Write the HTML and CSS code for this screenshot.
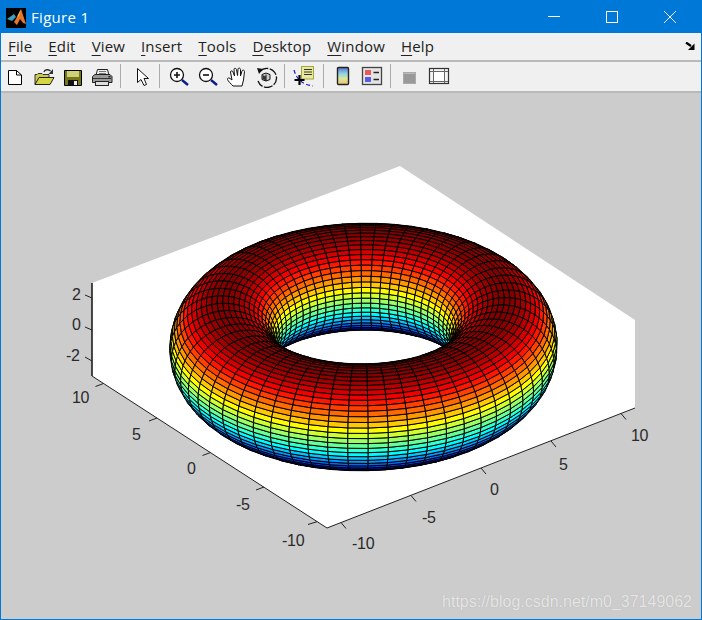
FILE: index.html
```html
<!DOCTYPE html>
<html lang="en">
<head>
<meta charset="utf-8">
<title>Figure 1</title>
<link rel="stylesheet" href="styles.css">
</head>
<body>
<div class="window">
  <header class="titlebar">
    <svg class="app-icon" viewBox="0 0 20 20" width="20" height="20">
      <rect width="20" height="20" fill="#000"/>
      <path d="M1 11 L8 6 L10 9 L6 13 Z" fill="#3f9fc0"/>
      <path d="M8 14 L11 9 L15 1 L20 16 L17 15 L14 11 L11 17 Z" fill="#e8762a"/>
      <path d="M15 1 L13 8 L11 9 Z" fill="#f2c14a"/>
    </svg>
    <span class="title">Figure 1</span>
    <div class="controls">
      <svg class="ctl" viewBox="0 0 58 34" width="58" height="34"><path d="M23 16.500H35" stroke="#fff" fill="none"/></svg>
      <svg class="ctl" viewBox="0 0 58 34" width="58" height="34"><rect x="23.500" y="11.500" width="11" height="11" stroke="#fff" fill="none"/></svg>
      <svg class="ctl" viewBox="0 0 58 34" width="58" height="34"><path d="M23 11L35 23M35 11L23 23" stroke="#fff" fill="none"/></svg>
    </div>
  </header>

  <nav class="menubar">
    <span class="menu"><u>F</u>ile</span>
    <span class="menu"><u>E</u>dit</span>
    <span class="menu"><u>V</u>iew</span>
    <span class="menu"><u>I</u>nsert</span>
    <span class="menu"><u>T</u>ools</span>
    <span class="menu"><u>D</u>esktop</span>
    <span class="menu"><u>W</u>indow</span>
    <span class="menu"><u>H</u>elp</span>
    <svg class="dock" viewBox="0 0 10 8" width="10" height="8"><path d="M1 0.500L6 4" stroke="#000" stroke-width="2.200" fill="none"/><path d="M9.500 1.500V8H3Z" fill="#000"/></svg>
  </nav>

  <div class="toolbar">
    <span class="slot slot-first"><svg viewBox="0 0 24 24"><path d="M5.500 6.500H13.500L18.500 11V20.500H5.500Z" fill="#fff" stroke="#000"/><path d="M13.500 6.500V11H18.500" fill="none" stroke="#000"/></svg></span>
    <span class="slot"><svg viewBox="0 0 24 24"><path d="M3 20.500V10.500H5L6 9.500H10L11 10.500H17V13" fill="#c9c94a" stroke="#333"/><path d="M3 20.500L7 13.500H22L18 20.500Z" fill="#d6d645" stroke="#222"/><path d="M12 8C13 5.500 16 5 18.500 7" fill="none" stroke="#333" stroke-width="1.400"/><path d="M21 5V10H16.500Z" fill="#333"/></svg></span>
    <span class="slot"><svg viewBox="0 0 24 24"><path d="M3.500 6.500H20.500V21.500H3.500Z" fill="#77771a" stroke="#000"/><rect x="6" y="7" width="12" height="6" fill="#d0d078"/><rect x="7" y="16" width="10" height="5.500" fill="#111"/><rect x="13" y="17" width="3" height="4" fill="#eee"/></svg></span>
    <span class="slot"><svg viewBox="0 0 24 24"><path d="M7.500 5.500H17.500L19 11H6Z" fill="#eee" stroke="#222"/><path d="M9 7.500H16M9 9.500H16" stroke="#777"/><path d="M2.500 12.500L5 10.500H20L22 12.500V18.500H2.500Z" fill="#999" stroke="#222"/><path d="M3 14.500H21" stroke="#333"/><rect x="5.500" y="17.500" width="13" height="4" fill="#ddd" stroke="#222"/><rect x="18.500" y="12" width="2" height="1.500" fill="#222"/></svg></span>
    <span class="sep sep-r"></span>
    <span class="slot"><svg viewBox="0 0 24 24"><path d="M8.500 4.500V18.500L12 15.500L15 21.500L17.500 20.500L15 14.500H19.500Z" fill="#fff" stroke="#111"/></svg></span>
    <span class="sep"></span>
    <span class="slot"><svg viewBox="0 0 24 24"><circle cx="10" cy="11" r="6.500" fill="#fff" stroke="#111" stroke-width="1.300"/><path d="M7 11H13M10 8V14" stroke="#111" stroke-width="1.600"/><path d="M15 16L21 21" stroke="#0b1f8a" stroke-width="2.400"/></svg></span>
    <span class="slot"><svg viewBox="0 0 24 24"><circle cx="10" cy="11" r="6.500" fill="#fff" stroke="#111" stroke-width="1.300"/><path d="M7 11H13" stroke="#111" stroke-width="1.600"/><path d="M15 16L21 21" stroke="#0b1f8a" stroke-width="2.400"/></svg></span>
    <span class="slot"><svg viewBox="0 0 24 24"><path d="M8 22C6 20 3 17 2.500 15.500C2 14 4 13.500 5 14.500L7 16L5.500 8C5.500 6.500 7.500 6.500 8 8L9.500 12L9 5.500C9 4 11 4 11.500 5.500L12.500 11.500L13 5C13.500 3.500 15.500 4 15.500 5.500L15.500 12L17 7C17.500 5.500 19.500 6 19.500 7.500L18.500 16L17 22Z" fill="#fff" stroke="#111"/></svg></span>
    <span class="slot"><svg viewBox="0 0 24 24"><path d="M6 7.500A9.500 9.500 0 1 1 4 17" fill="none" stroke="#111" stroke-width="1.300" stroke-dasharray="9 1.500"/><path d="M3 4L9 5L5 10Z" fill="#111"/><path d="M8 10.500L12 9L16 10.500V15.500L12 17L8 15.500Z" fill="#ccc" stroke="#111"/><path d="M12 10.500V17" stroke="#111"/><path d="M8.500 11L12 12.500V16.500L8.500 15Z" fill="#333"/></svg></span>
    <span class="sep"></span>
    <span class="slot"><svg viewBox="0 0 24 24"><path d="M2 6C4 13 8 20 21 22" fill="none" stroke="#1a1ad0" stroke-width="1.200" stroke-dasharray="4 2.500"/><rect x="9.500" y="2.500" width="12" height="12.500" fill="#e8e8a0" stroke="#a8a83a"/><path d="M12 5.500H20M12 8H20M12 10.500H20" stroke="#333"/><path d="M2.500 16H12.500M7.500 11V21" stroke="#000" stroke-width="2.200"/></svg></span>
    <span class="sep sep-l"></span>
    <span class="slot"><svg viewBox="0 0 24 24"><defs><linearGradient id="cb" x1="0" y1="0" x2="0" y2="1"><stop offset="0" stop-color="#5a70d8"/><stop offset=".35" stop-color="#90d0e0"/><stop offset=".65" stop-color="#d8e8a0"/><stop offset="1" stop-color="#f0c070"/></linearGradient></defs><rect x="6.500" y="3.500" width="11" height="17" rx="1" fill="url(#cb)" stroke="#222" stroke-width="1.400"/></svg></span>
    <span class="slot"><svg viewBox="0 0 24 24"><rect x="2.500" y="3.500" width="19" height="17" fill="#e4e4e4" stroke="#444" stroke-width="1.300"/><rect x="5" y="6" width="6" height="5" fill="#e85a5a"/><rect x="5" y="13" width="6" height="5" fill="#5a5ae8"/><path d="M13.500 8.500H19M13.500 15.500H19" stroke="#222" stroke-width="1.300"/></svg></span>
    <span class="sep"></span>
    <span class="slot"><svg viewBox="0 0 24 24"><rect x="5.500" y="8.500" width="12" height="11" fill="#999" stroke="#aaa"/><path d="M6 9.500H17" stroke="#bbb"/></svg></span>
    <span class="slot"><svg viewBox="0 0 24 24"><rect x="2.500" y="4.500" width="19" height="15" fill="#f4f4f4" stroke="#333" stroke-width="1.200"/><path d="M6.500 5V19M17.500 5V19M3 7.500H21M3 17.500H21" stroke="#666"/><rect x="7" y="8" width="10" height="9" fill="#fff"/></svg></span>
  </div>
  <div class="rule"></div>

  <main class="figure">
    <svg class="plot" viewBox="1 93 700 526" width="700" height="526">
      <polygon class="paper" points="92,283 400,166 635,320 635,408 327,528 92,376"/>
      <path class="axis-z" d="M92 283V376"/>
      <path class="axis" d="M92 376L327 528L635 408"/>
      <path class="tick" d="M85 295L92 298M85 327L92 330M85 357L92 361"/>
      <path class="tick" d="M317 521.700L308 524.500M264 487L256 490M210.500 452.500L202.500 455.500M157 418L149 421M103.500 383.500L95.500 386.500"/>
      <path class="tick" d="M341 522.500L346 528.500M411 495.500L416 501.500M481 468L486 474M551 441L556 447M621 413.500L626 419.500"/>
      <g id="torus"></g>
      <text class="label" x="72" y="300">2</text>
      <text class="label" x="72" y="330">0</text>
      <text class="label" x="66" y="361">-2</text>
      <text class="label" x="72" y="403">10</text>
      <text class="label" x="132" y="440">5</text>
      <text class="label" x="187" y="474">0</text>
      <text class="label" x="236" y="510">-5</text>
      <text class="label" x="282" y="546">-10</text>
      <text class="label" x="352" y="549">-10</text>
      <text class="label" x="422" y="523">-5</text>
      <text class="label" x="490" y="495">0</text>
      <text class="label" x="559" y="470">5</text>
      <text class="label" x="631" y="441">10</text>
    </svg>
    <span class="watermark">https://blog.csdn.net/m0_37149062</span>
  </main>
</div>
<script src="torus.js"></script>
</body>
</html>
```
FILE: styles.css
```css
* { box-sizing: border-box; }
html, body { margin: 0; padding: 0; background: #ccc; overflow: hidden; }
.window {
  width: 702px; height: 620px;
  display: flex; flex-direction: column;
  border: 1px solid #0078d7; border-top: 0;
  background: #ccc;
  font-family: "Open Sans", "Noto Sans", sans-serif;
}
.titlebar {
  height: 33px; flex: none;
  display: flex; align-items: center;
  background: #0078d7; color: #fff;
  padding-left: 5px;
}
.app-icon { flex: none; margin-top: 2px; }
.title { margin-left: 5px; font-size: 15px; letter-spacing: .3px; margin-top: 1px; }
.controls { margin-left: auto; margin-right: 2px; display: flex; }
.ctl { display: block; }
.menubar {
  height: 29px; flex: none;
  display: flex; align-items: center; gap: 16px;
  background: #f0f0f0; color: #222;
  padding: 0 0 2px 7px;
  font-size: 15px; letter-spacing: .15px;
  border-bottom: 2px solid #b9b9b9;
}
.menu u { text-underline-offset: 3px; text-decoration-thickness: 1px; }
.dock { margin-left: auto; margin-right: 6px; }
.toolbar {
  height: 29px; flex: none;
  display: flex; align-items: flex-start;
  background: #f0f0f0;
  padding-top: 2px;
}
.slot { width: 29px; height: 24px; flex: none; display: flex; justify-content: center; }
.slot-first { margin-left: -1px; }
.slot svg { width: 24px; height: 24px; display: block; }
.sep { width: 1px; height: 24px; background: #aaa; margin: 0 4px; flex: none; }
.sep-r { margin-right: 5px; }
.sep-l { margin-left: 5px; }
.rule { height: 2px; flex: none; background: #b9b9b9; }
.figure { flex: 1; position: relative; min-height: 0; background: #ccc; }
.plot { display: block; }
.paper { fill: #fff; }
.axis-z { stroke: #111; stroke-width: 1.500; fill: none; }
.axis { stroke: #222; stroke-width: 1; fill: none; }
.tick { stroke: #222; stroke-width: 1; fill: none; }
.label { font-family: "Liberation Sans", Arial, sans-serif; font-size: 16px; letter-spacing: -.3px; fill: #2a2a2a; }
.facet { stroke: #000; stroke-width: 1; stroke-linejoin: round; }
.watermark {
  position: absolute; right: 9px; bottom: 8px;
  font-family: "Liberation Sans", Arial, sans-serif; font-size: 16px;
  color: #e6e6e6; text-shadow: 0 0 1px #aaa;
}
```
FILE: torus.js
```js
(function () {
  var NS = "http://www.w3.org/2000/svg";
  var R = 8, r = 3, NU = 60, NV = 60;
  function project(x, y, z) {
    return [363.5 + 14 * x - 10.68 * y, 347 - 5.45 * x - 6.9 * y - 15.5 * z];
  }
  function depth(x, y, z) { return -165.5 * x - 217 * y + 154.8 * z; }
  function point(i, j) {
    var u = 2 * Math.PI * i / NU, v = 2 * Math.PI * j / NV;
    var rho = R + r * Math.cos(v);
    return [rho * Math.cos(u), rho * Math.sin(u), r * Math.sin(v)];
  }
  function jet(t) {
    var c = function (x) { return Math.round(255 * Math.max(0, Math.min(1, x))); };
    return "rgb(" + c(1.5 - Math.abs(4 * t - 3)) + "," + c(1.5 - Math.abs(4 * t - 2)) + "," + c(1.5 - Math.abs(4 * t - 1)) + ")";
  }
  var facets = [];
  for (var i = 0; i < NU; i++) {
    for (var j = 0; j < NV; j++) {
      var ps = [point(i, j), point(i + 1, j), point(i + 1, j + 1), point(i, j + 1)];
      var scr = ps.map(function (p) { return project(p[0], p[1], p[2]); });
      var area = 0;
      for (var k = 0; k < 4; k++) {
        var a = scr[k], b = scr[(k + 1) % 4];
        area += a[0] * b[1] - b[0] * a[1];
      }
      if (area > 0) continue;
      var cz = 0, cd = 0;
      ps.forEach(function (p) { cz += p[2] / 4; cd += depth(p[0], p[1], p[2]) / 4; });
      facets.push({ scr: scr, z: cz, d: cd });
    }
  }
  facets.sort(function (p, q) { return p.d - q.d; });
  var group = document.getElementById("torus");
  facets.forEach(function (f) {
    var el = document.createElementNS(NS, "polygon");
    el.setAttribute("points", f.scr.map(function (p) { return p[0].toFixed(1) + "," + p[1].toFixed(1); }).join(" "));
    el.setAttribute("class", "facet");
    el.style.fill = jet((f.z + 3) / 6);
    group.appendChild(el);
  });
})();
```
